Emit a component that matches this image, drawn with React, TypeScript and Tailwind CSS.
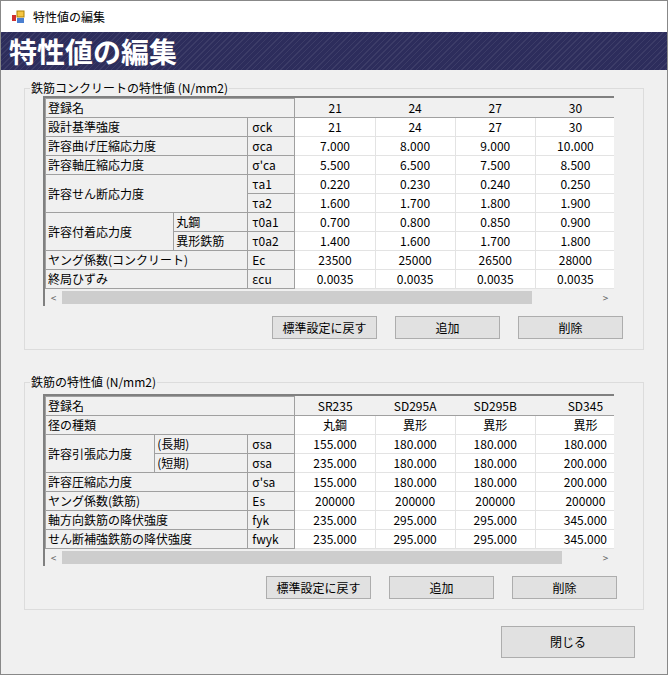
import React from "react";

const F = { fontFamily: '"Noto Sans CJK JP", "Noto Sans", sans-serif' };
const L = "border border-[#a0a0a0] bg-[#f0f0f0] px-[2px] text-left whitespace-nowrap overflow-hidden";
const S = "border border-[#a0a0a0] bg-[#f0f0f0] pl-[4px] text-left whitespace-nowrap overflow-hidden";
const V = "border border-[#e3e3e3] bg-white text-center whitespace-nowrap overflow-hidden";
const H = "border-b border-[#a0a0a0] bg-[#f0f0f0] text-center whitespace-nowrap overflow-hidden";

function Btn({ children, w = "w-[105px]" }: { children: React.ReactNode; w?: string }) {
  return (
    <div className={`${w} h-[23px] border border-[#adadad] bg-[#e1e1e1] flex items-center justify-center text-[12px]`}>{children}</div>
  );
}

function Scroll({ thumb }: { thumb: number }) {
  return (
    <div className="h-[17px] bg-[#f0f0f0] flex items-center text-[10px] text-[#606060]">
      <span className="w-[17px] text-center">&lt;</span>
      <div className="h-[13px] bg-[#cdcdcd]" style={{ width: thumb }} />
      <div className="flex-1" />
      <span className="w-[17px] text-center">&gt;</span>
    </div>
  );
}

function Group({ title, top, children }: { title: string; top: number; children: React.ReactNode }) {
  return (
    <div className="relative mx-[23px] border border-[#dcdcdc]" style={{ marginTop: top }}>
      <span className="absolute left-[5px] top-[-9px] bg-[#f0f0f0] px-[1px] text-[12px] leading-[16px]">{title}</span>
      {children}
    </div>
  );
}

const vals1 = [
  ["21", "24", "27", "30"],
  ["7.000", "8.000", "9.000", "10.000"],
  ["5.500", "6.500", "7.500", "8.500"],
  ["0.220", "0.230", "0.240", "0.250"],
  ["1.600", "1.700", "1.800", "1.900"],
  ["0.700", "0.800", "0.850", "0.900"],
  ["1.400", "1.600", "1.700", "1.800"],
  ["23500", "25000", "26500", "28000"],
  ["0.0035", "0.0035", "0.0035", "0.0035"],
];
const vals2 = [
  ["丸鋼", "異形", "異形", "異形"],
  ["155.000", "180.000", "180.000", "180.000"],
  ["235.000", "180.000", "180.000", "200.000"],
  ["155.000", "180.000", "180.000", "200.000"],
  ["200000", "200000", "200000", "200000"],
  ["235.000", "295.000", "295.000", "345.000"],
  ["235.000", "295.000", "295.000", "345.000"],
];

function Vs({ r }: { r: string[] }) {
  return <>{r.map((v, i) => <td key={i} className={V}>{v}</td>)}</>;
}

export default function App() {
  const tr = "h-[19px]";
  return (
    <div style={F} className="w-[668px] h-[675px] bg-[#f0f0f0] text-[12px] text-black border border-[#888] overflow-hidden">
      <div className="h-[31px] bg-white flex items-center px-[10px] gap-[8px] text-[12px]">
        <svg width="14" height="14" viewBox="0 0 14 14"><rect x="6" y="1" width="7" height="6" fill="#f5c542" stroke="#b08000" /><rect x="1" y="5" width="4" height="6" fill="#d03030" /><rect x="6" y="8" width="7" height="5" fill="#4a7fd0" /></svg>
        <span>特性値の編集</span>
      </div>
      <div className="h-[38px] flex items-center px-[8px] text-white font-bold text-[28px] bg-[#2d2d5c]" style={{ backgroundImage: "repeating-linear-gradient(135deg, rgba(255,255,255,0.07) 0 1px, transparent 1px 4px)" }}>
        特性値の編集
      </div>
      <Group title="鉄筋コンクリートの特性値 (N/mm2)" top={18}>
        <div className="ml-[18px] mt-[7px] w-[571px] border-t-2 border-l-2 border-[#808080] overflow-hidden">
          <table className="table-fixed border-collapse w-[571px] text-[12px] leading-[16px]">
            <colgroup><col className="w-[128px]" /><col className="w-[74px]" /><col className="w-[47px]" /><col className="w-[80px]" /><col className="w-[80px]" /><col className="w-[80px]" /><col className="w-[80px]" /></colgroup>
            <tbody>
              <tr className={tr}><td colSpan={3} className={L}>登録名</td>{["21", "24", "27", "30"].map(v => <td key={v} className={H}>{v}</td>)}</tr>
              <tr className={tr}><td colSpan={2} className={L}>設計基準強度</td><td className={S}>σck</td><Vs r={vals1[0]} /></tr>
              <tr className={tr}><td colSpan={2} className={L}>許容曲げ圧縮応力度</td><td className={S}>σca</td><Vs r={vals1[1]} /></tr>
              <tr className={tr}><td colSpan={2} className={L}>許容軸圧縮応力度</td><td className={S}>σ'ca</td><Vs r={vals1[2]} /></tr>
              <tr className={tr}><td colSpan={2} rowSpan={2} className={L}>許容せん断応力度</td><td className={S}>τa1</td><Vs r={vals1[3]} /></tr>
              <tr className={tr}><td className={S}>τa2</td><Vs r={vals1[4]} /></tr>
              <tr className={tr}><td rowSpan={2} className={L}>許容付着応力度</td><td className={L}>丸鋼</td><td className={S}>τ0a1</td><Vs r={vals1[5]} /></tr>
              <tr className={tr}><td className={L}>異形鉄筋</td><td className={S}>τ0a2</td><Vs r={vals1[6]} /></tr>
              <tr className={tr}><td colSpan={2} className={L}>ヤング係数(コンクリート)</td><td className={S}>Ec</td><Vs r={vals1[7]} /></tr>
              <tr className={tr}><td colSpan={2} className={L}>終局ひずみ</td><td className={S}>εcu</td><Vs r={vals1[8]} /></tr>
            </tbody>
          </table>
          <Scroll thumb={470} />
        </div>
        <div className="flex justify-end gap-[18px] pr-[20px] mt-[10px] mb-[10px]">
          <Btn>標準設定に戻す</Btn><Btn>追加</Btn><Btn>削除</Btn>
        </div>
      </Group>
      <Group title="鉄筋の特性値 (N/mm2)" top={32}>
        <div className="ml-[18px] mt-[11px] w-[571px] border-t-2 border-l-2 border-[#808080] overflow-hidden">
          <table className="table-fixed border-collapse w-[591px] text-[12px] leading-[16px]">
            <colgroup><col className="w-[109px]" /><col className="w-[93px]" /><col className="w-[47px]" /><col className="w-[80px]" /><col className="w-[80px]" /><col className="w-[80px]" /><col className="w-[100px]" /></colgroup>
            <tbody>
              <tr className={tr}><td colSpan={3} className={L}>登録名</td>{["SR235", "SD295A", "SD295B", "SD345"].map(v => <td key={v} className={H}>{v}</td>)}</tr>
              <tr className={tr}><td colSpan={3} className={L}>径の種類</td><Vs r={vals2[0]} /></tr>
              <tr className={tr}><td rowSpan={2} className={L}>許容引張応力度</td><td className={L}>(長期)</td><td className={S}>σsa</td><Vs r={vals2[1]} /></tr>
              <tr className={tr}><td className={L}>(短期)</td><td className={S}>σsa</td><Vs r={vals2[2]} /></tr>
              <tr className={tr}><td colSpan={2} className={L}>許容圧縮応力度</td><td className={S}>σ'sa</td><Vs r={vals2[3]} /></tr>
              <tr className={tr}><td colSpan={2} className={L}>ヤング係数(鉄筋)</td><td className={S}>Es</td><Vs r={vals2[4]} /></tr>
              <tr className={tr}><td colSpan={2} className={L}>軸方向鉄筋の降伏強度</td><td className={S}>fyk</td><Vs r={vals2[5]} /></tr>
              <tr className={tr}><td colSpan={2} className={L}>せん断補強鉄筋の降伏強度</td><td className={S}>fwyk</td><Vs r={vals2[6]} /></tr>
            </tbody>
          </table>
          <Scroll thumb={500} />
        </div>
        <div className="flex justify-end gap-[18px] pr-[26px] mt-[10px] mb-[10px]">
          <Btn>標準設定に戻す</Btn><Btn>追加</Btn><Btn>削除</Btn>
        </div>
      </Group>
      <div className="flex justify-end pr-[32px] mt-[16px]">
        <div className="w-[134px] h-[32px] border border-[#adadad] bg-[#e1e1e1] flex items-center justify-center text-[12px]">閉じる</div>
      </div>
    </div>
  );
}
